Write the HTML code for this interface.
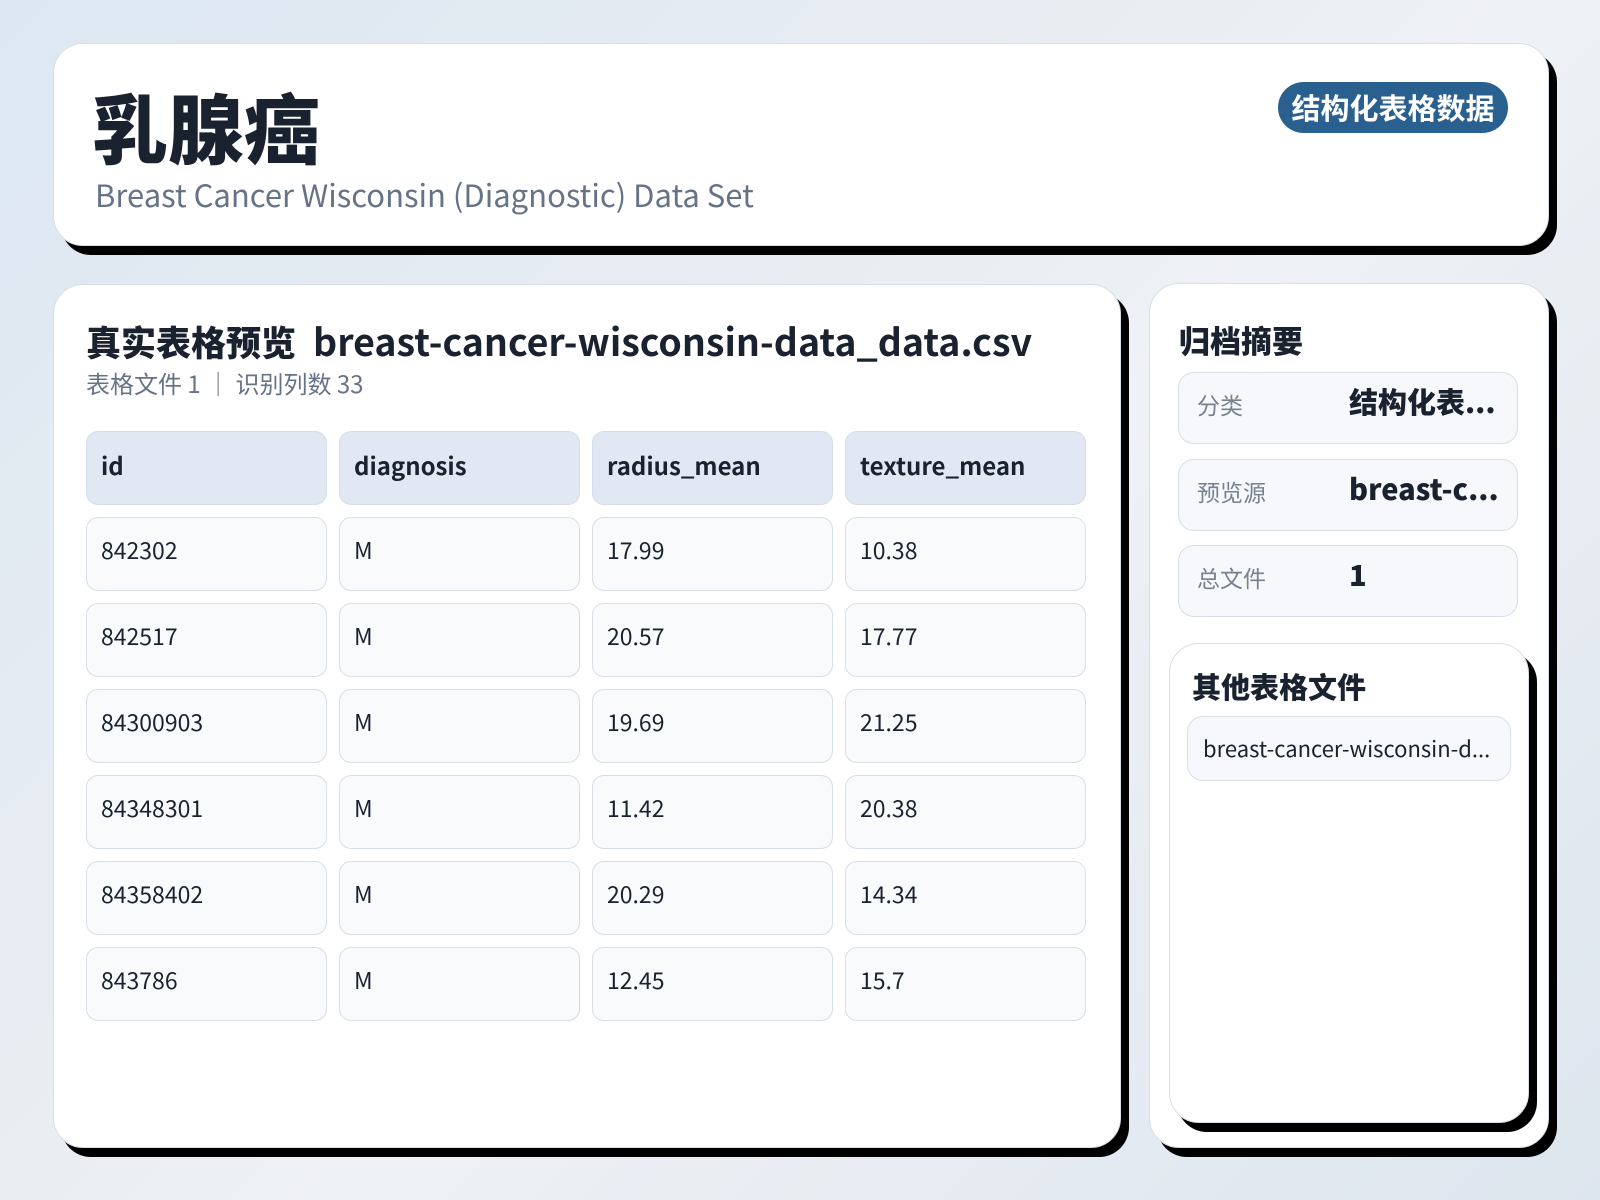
<!DOCTYPE html>
<html><head><meta charset="utf-8"><style>
*{box-sizing:border-box;margin:0;padding:0}
body{width:1600px;height:1200px;overflow:hidden;background:linear-gradient(135deg,#dce7f2 0%,#e9edf2 40%,#eef1f5 55%,#dde5ee 100%);font-family:"Noto Sans CJK SC",sans-serif;position:relative;color:#1a2230}
.card{position:absolute;background:#fff;border:1px solid #d8dee6;border-radius:30px;box-shadow:8px 9px 0 #000}
.h1{position:absolute;left:38px;top:36px;font-size:76px;font-weight:900;line-height:90px;color:#1a2230}
.sub{position:absolute;left:41px;top:130px;font-size:31px;color:#667386;line-height:40px}
.badge{position:absolute;left:1278px;top:82px;width:230px;height:51px;border-radius:26px;background:#2a6090;color:#fff;font-weight:700;font-size:29px;text-align:center;line-height:51px}
.sec{position:absolute;font-size:37.5px;font-weight:700;white-space:nowrap;line-height:44px}
.meta{position:absolute;font-size:24px;color:#667386;line-height:30px}
.cell{position:absolute;width:241px;height:74px;border-radius:12px;border:1px solid #d8dee6;background:#f8fafc;font-size:23px;line-height:62px;padding-left:14px;color:#1a2230}
.hd{background:#e1e8f3;border-color:#d5dde8;font-weight:700;font-size:24px;line-height:66px}
.row{position:absolute;left:1178px;width:340px;height:72px;border-radius:16px;border:1px solid #d8dee6;background:#f6f8fb}
.row .l{position:absolute;left:18px;top:14px;font-size:23px;color:#778190;line-height:34px}
.row .v{position:absolute;left:170px;top:8px;font-size:29px;font-weight:900;line-height:40px}
</style></head><body>
<div class="card" style="left:53px;top:43px;width:1496px;height:203px">
<div class="h1">乳腺癌</div>
<div class="sub">Breast Cancer Wisconsin (Diagnostic) Data Set</div>
</div>
<div class="badge">结构化表格数据</div>

<div class="card" style="left:53px;top:284px;width:1068px;height:864px"></div>
<div class="sec" style="left:86px;top:318px"><span style="font-weight:900;font-size:35px">真实表格预览</span>&nbsp; breast-cancer-wisconsin-data_data.csv</div>
<div class="meta" style="left:86px;top:368px">表格文件 1 ｜ 识别列数 33</div>

<div class="cell hd" style="left:86px;top:431px">id</div>
<div class="cell hd" style="left:339px;top:431px">diagnosis</div>
<div class="cell hd" style="left:592px;top:431px">radius_mean</div>
<div class="cell hd" style="left:845px;top:431px">texture_mean</div>

<div class="cell" style="left:86px;top:517px">842302</div><div class="cell" style="left:339px;top:517px">M</div><div class="cell" style="left:592px;top:517px">17.99</div><div class="cell" style="left:845px;top:517px">10.38</div>
<div class="cell" style="left:86px;top:603px">842517</div><div class="cell" style="left:339px;top:603px">M</div><div class="cell" style="left:592px;top:603px">20.57</div><div class="cell" style="left:845px;top:603px">17.77</div>
<div class="cell" style="left:86px;top:689px">84300903</div><div class="cell" style="left:339px;top:689px">M</div><div class="cell" style="left:592px;top:689px">19.69</div><div class="cell" style="left:845px;top:689px">21.25</div>
<div class="cell" style="left:86px;top:775px">84348301</div><div class="cell" style="left:339px;top:775px">M</div><div class="cell" style="left:592px;top:775px">11.42</div><div class="cell" style="left:845px;top:775px">20.38</div>
<div class="cell" style="left:86px;top:861px">84358402</div><div class="cell" style="left:339px;top:861px">M</div><div class="cell" style="left:592px;top:861px">20.29</div><div class="cell" style="left:845px;top:861px">14.34</div>
<div class="cell" style="left:86px;top:947px">843786</div><div class="cell" style="left:339px;top:947px">M</div><div class="cell" style="left:592px;top:947px">12.45</div><div class="cell" style="left:845px;top:947px">15.7</div>

<div class="card" style="left:1149px;top:283px;width:400px;height:865px"></div>
<div class="sec" style="left:1179px;top:318px;font-size:31px;font-weight:900">归档摘要</div>
<div class="row" style="top:372px"><div class="l">分类</div><div class="v">结构化表...</div></div>
<div class="row" style="top:459px"><div class="l">预览源</div><div class="v">breast-c...</div></div>
<div class="row" style="top:545px"><div class="l">总文件</div><div class="v">1</div></div>

<div class="card" style="left:1169px;top:643px;width:360px;height:480px"></div>
<div class="sec" style="left:1192px;top:664px;font-size:29px;font-weight:900">其他表格文件</div>
<div style="position:absolute;left:1187px;top:716px;width:324px;height:65px;border-radius:16px;border:1px solid #d8dee6;background:#f6f8fb;font-size:22px;line-height:63px;padding-left:15px;white-space:nowrap;overflow:hidden">breast-cancer-wisconsin-d...</div>
</body></html>
